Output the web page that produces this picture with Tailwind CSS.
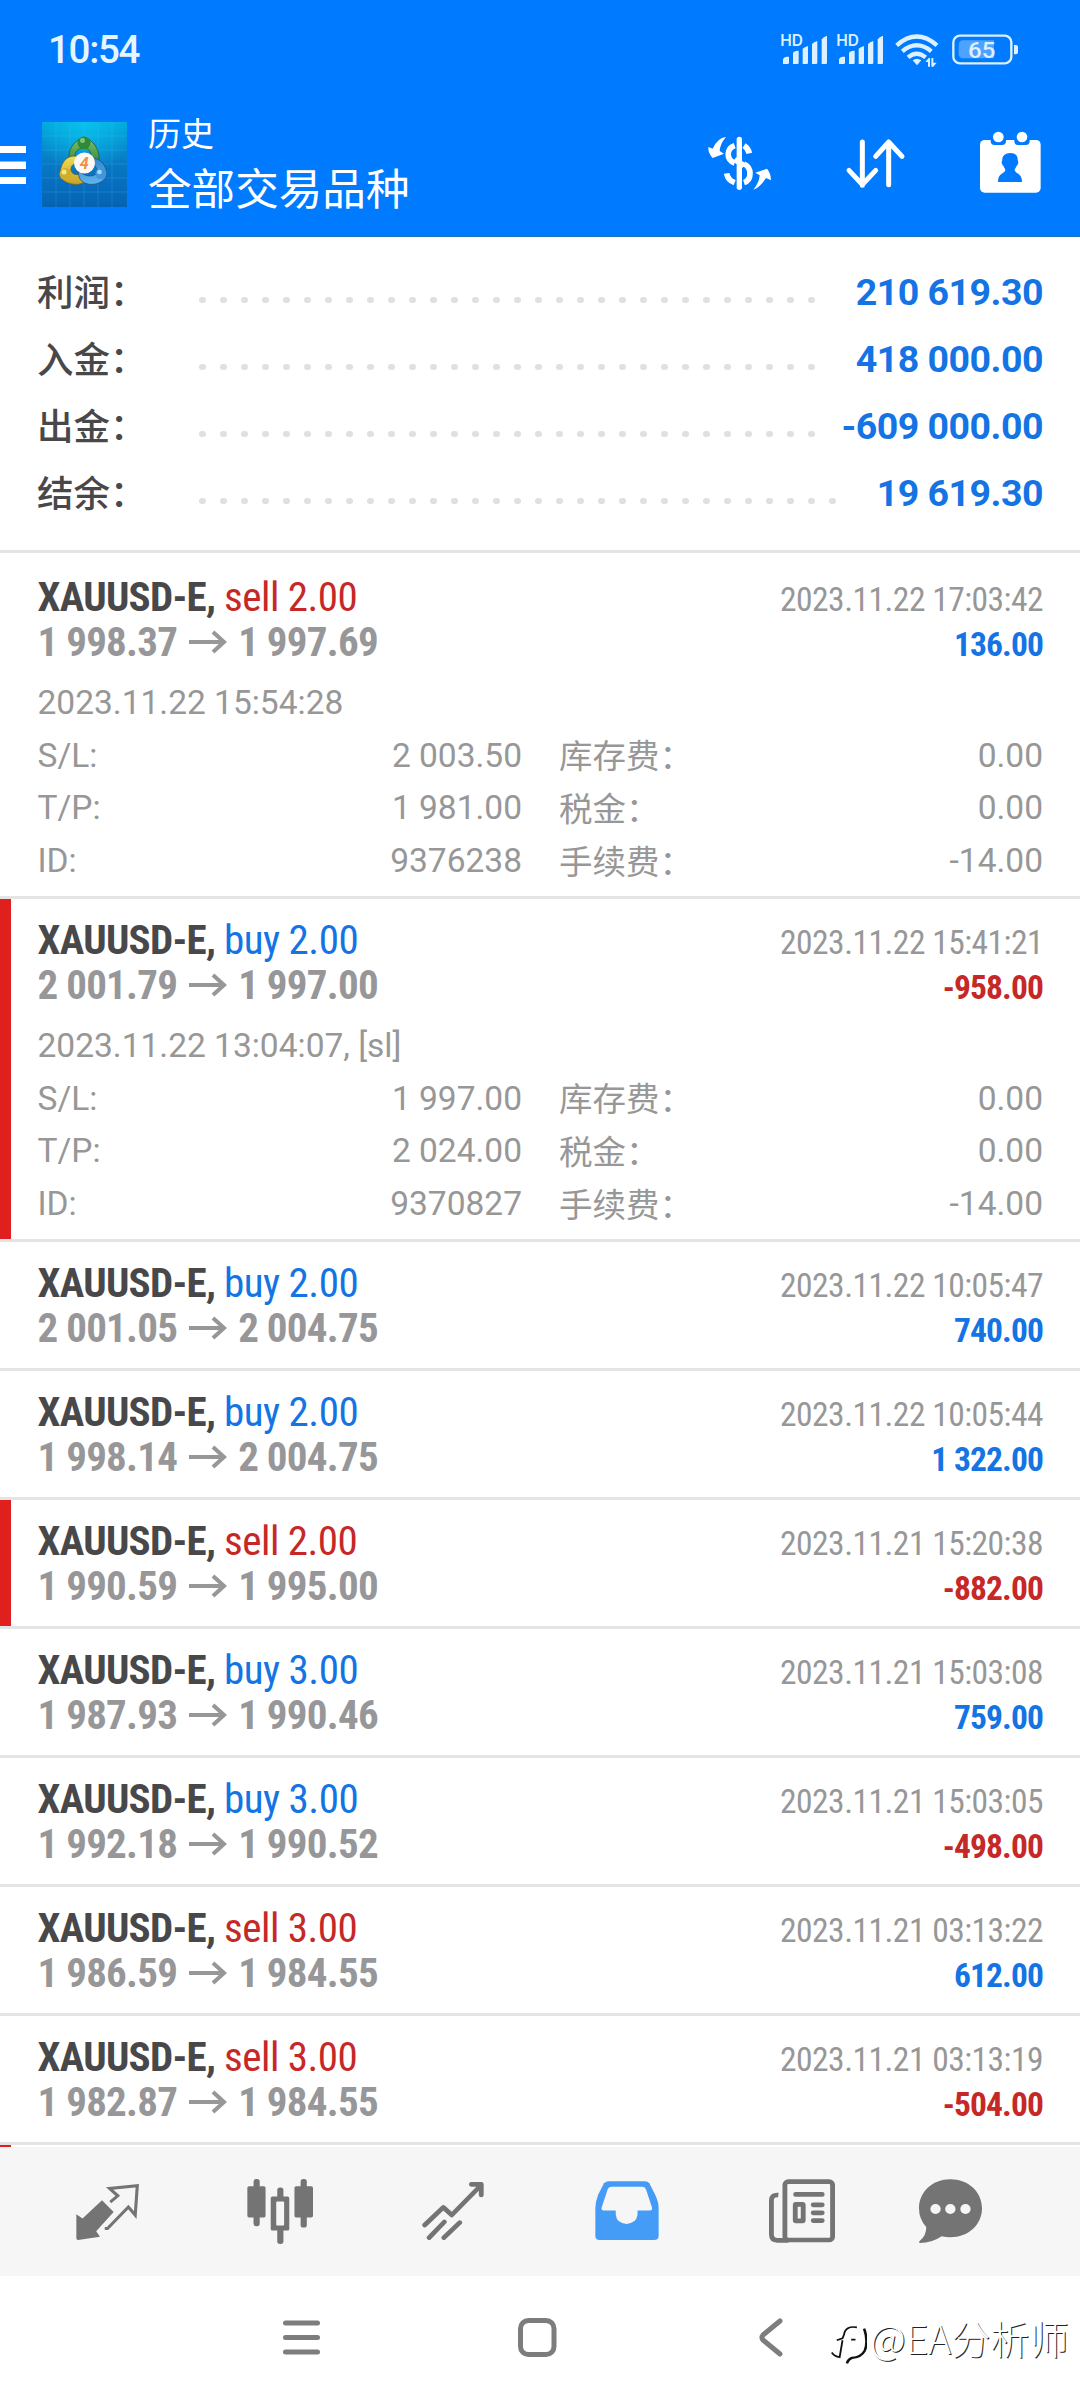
<!DOCTYPE html>
<html lang="zh-CN">
<head>
<meta charset="utf-8">
<title>历史</title>
<script src="https://cdn.jsdelivr.net/npm/@tailwindcss/browser@4"></script>
</head>
<body class="w-[1080px] h-[2400px] overflow-hidden bg-white font-['Roboto','Noto_Sans_CJK_SC',sans-serif] flex flex-col">

<header class="h-[237px] shrink-0 bg-[#007aff] text-white flex flex-col border-b-2 border-[#1f74c4]">
  <div class="h-[100px] shrink-0 flex items-center pl-[48px] pr-[60px]">
    <span class="text-[38.500px] font-medium tracking-[-1.3px] text-[#e6f6ff] flex-1">10:54</span>
    <svg class="w-[240px] h-[40px]" viewBox="300 90 720 120" fill="#dcf0ff">
      <g id="sig">
        <text x="301" y="137" font-size="47" font-weight="600" font-family="Inter" textLength="68" lengthAdjust="spacingAndGlyphs">HD</text>
        <path d="M309 192v-14q2-7 10-8h8v18q0 4-4 4zM339 192v-34q4-6 15-6h2v36q0 4-4 4zM368 192v-46q5-5 16-8v50q0 4-4 4zM396 192v-60q5-6 16-9v65q0 4-4 4zM425 192v-74q5-8 16-11v81q0 4-4 4z"/>
      </g>
      <use href="#sig" x="168"/>
      <g fill="none" stroke="#dcf0ff" stroke-width="13">
        <path d="M650 136Q710 83 771 136"/><path d="M667 154Q710 118 754 154"/><path d="M684 172Q710 150 737 172"/>
      </g>
      <path d="M698 181q13-9 26 0l-13 15zM736 186l10-12h4v26h-6v-14zM754 174h6v14h10l-10 12h-6z"/>
      <rect x="820" y="107" width="174" height="83" rx="20" fill="none" stroke="#dcf0ff" stroke-width="7"/>
      <path d="M836 135q0-14 14-14h92v54h-92q-14 0-14-14z" fill="#4da3ff"/>
      <path d="M1002 135h6q6 0 6 6v16q0 6-6 6h-6z"/>
      <text x="864" y="174" font-size="68" font-weight="500" font-family="Roboto" textLength="82" lengthAdjust="spacingAndGlyphs">65</text>
    </svg>
  </div>
  <div class="flex-1 flex items-start">
    <svg class="w-[26px] h-[39px] mt-[46px]" viewBox="0 0 26 39" fill="#fff"><path d="M0 0h26v7H0zM0 15.500h26v7.500H0zM0 31h26v7H0z"/></svg>
    <svg class="w-[85px] h-[85px] mt-[22px] ml-[16px]" viewBox="0 0 85 85">
      <defs>
        <linearGradient id="bg" x1="0" y1="0" x2="0" y2="1"><stop offset="0" stop-color="#02a6dc"/><stop offset=".5" stop-color="#0878c4"/><stop offset="1" stop-color="#0562b4"/></linearGradient>
        <radialGradient id="glow" cx=".5" cy="0" r=".6"><stop offset="0" stop-color="#0ac8f0" stop-opacity=".8"/><stop offset="1" stop-color="#0ac8f0" stop-opacity="0"/></radialGradient>
        <linearGradient id="gg" x1="0" y1="0" x2="0" y2="1"><stop offset="0" stop-color="#86c272"/><stop offset="1" stop-color="#2a8434"/></linearGradient>
        <linearGradient id="yy" x1="0" y1="0" x2="0" y2="1"><stop offset="0" stop-color="#eede58"/><stop offset="1" stop-color="#c8a424"/></linearGradient>
        <linearGradient id="bb" x1="0" y1="0" x2="0" y2="1"><stop offset="0" stop-color="#2f86cc"/><stop offset="1" stop-color="#62b4ea"/></linearGradient>
      </defs>
      <rect width="85" height="85" fill="url(#bg)"/><rect width="85" height="85" fill="url(#glow)"/>
      <path d="M14 0v85M28 0v85M42 0v85M56 0v85M70 0v85M0 14h85M0 28h85M0 42h85M0 56h85M0 70h85" stroke="#5cc4ee" stroke-opacity=".22" stroke-width="1"/>
      <path d="M42 15C50 18 58 26 57 38 56 44 52 44 48 42 52 32 47 26 42 26 36 26 32 30 33 37 31 42 27 38 27 34 27 25 34 18 42 15z" fill="url(#gg)" stroke="#1d5a3c" stroke-width=".8"/>
      <path d="M34 34C24 33 18 42 18 53 20 62 36 65 43 60 40 57 38 54 38 52 33 54 28 51 29 46 30 42 34 41 36 40z" fill="url(#yy)" stroke="#6d6420" stroke-width=".8"/>
      <path d="M53 36C62 39 66 48 64 55 58 65 42 64 38 57 36 52 36 50 37 48 42 55 50 55 54 52 56 48 54 44 51 42z" fill="url(#bb)" stroke="#1c4f86" stroke-width=".8"/>
      <circle cx="42" cy="21" r="6.500" fill="#2f8a38"/><circle cx="40.500" cy="18.500" r="2.500" fill="#7cc47a"/>
      <circle cx="23.500" cy="52" r="6" fill="#d0ae2c"/><circle cx="22" cy="50" r="2.500" fill="#f3e88a"/>
      <circle cx="59" cy="51.500" r="5.500" fill="#3f96de"/><circle cx="57.500" cy="50" r="2.300" fill="#a8dafa"/>
      <circle cx="42.500" cy="41" r="10.500" fill="#fdf8f4"/>
      <text x="42.300" y="47" text-anchor="middle" font-size="16" font-weight="700" font-style="italic" font-family="Roboto" fill="#ee8f48">4</text>
    </svg>
    <div class="flex-1 flex flex-col pl-[21px] pt-[9.500px] font-['Noto_Sans_CJK_SC',sans-serif] font-normal whitespace-nowrap">
      <span class="text-[33px] leading-[44px]">历史</span>
      <span class="text-[43.600px] leading-[64px]">全部交易品种</span>
    </div>
    <svg class="w-[400px] h-[110px]" viewBox="0 300 1200 330" fill="#fff" stroke-linecap="round" stroke-linejoin="round">
      <g fill="none" stroke="#fff">
        <path d="M178 418v144" stroke-width="16"/>
        <path d="M164 437C138 446 138 480 164 489M192 437Q205 445 208 460M192 492C216 502 216 540 192 548M164 548Q143 540 140 520" stroke-width="17" stroke-linecap="butt"/>
        <path d="M164 478L192 497" stroke-width="17" stroke-linecap="butt"/>
      </g>
      <path d="M138 411Q112 414 98 446L85 441Q84 460 98 474L132 461L119 453Q120 432 138 411zM220 569Q240 562 258 534L273 541Q273 520 261 506L226 518L239 526Q238 548 220 569z"/>
      <path d="M547 426v130M507 511l40 43 40-43M626 554V426M587 469l39-43 40 43" fill="none" stroke="#fff" stroke-width="15"/>
      <rect x="900" y="420" width="182" height="158" rx="14"/>
      <path d="M932 418v5q0 12 12 12h22q12 0 12-12v-5zM1003 418v5q0 12 12 12h22q12 0 12-12v-5z" fill="#007aff"/>
      <circle cx="955" cy="411" r="16"/><circle cx="1026" cy="411" r="16"/>
      <path d="M991 459c17 0 23 10 22 22 4 4 1 14-3 16-2 6-6 9-6 14 4 12 22 8 22 35h-72c0-27 18-23 22-35 0-5-4-8-6-14-4-2-7-12-3-16-1-12 7-22 24-22z" fill="#007aff"/>
    </svg>
  </div>
</header>

<section class="h-[313px] shrink-0 pt-[22px] px-[37px] flex flex-col" id="summary"></section>
<div class="h-[3px] shrink-0 bg-[#e4e4e4]"></div>

<main class="h-[1594px] shrink-0 overflow-hidden pt-[3px]" id="list"></main>

<nav class="h-[129px] shrink-0 bg-[#f6f6f6] flex items-start pl-[76px] pt-px text-[#747474]">
  <svg class="w-[63px] h-[56px] mt-[36px]" viewBox="220 191 184 166" preserveAspectRatio="none" fill="currentColor">
    <path d="M296 239L330 274 279 331 290 347 226 357Q221 357 221 351V281L239 293z"/>
    <path d="M320 245L342 226 318 204 399 196 393 283 373 259 312 323H304" fill="none" stroke="currentColor" stroke-width="9"/>
  </svg>
  <svg class="w-[66px] h-[65px] mt-[31px] ml-[108px]" viewBox="717 176 192 194" preserveAspectRatio="none" fill="currentColor">
    <rect x="736" y="176" width="18" height="141" rx="8"/><rect x="718" y="198" width="53" height="93" rx="5"/>
    <rect x="873" y="176" width="18" height="145" rx="8"/><rect x="855" y="198" width="54" height="93" rx="5"/>
    <rect x="805" y="201" width="18" height="169" rx="8"/><rect x="786" y="228" width="54" height="102" rx="5"/><rect x="802" y="243" width="23" height="72" rx="3" fill="#f6f6f6"/>
  </svg>
  <svg class="w-[62px] h-[58px] mt-[34px] ml-[109px]" viewBox="1225 183 181 174" preserveAspectRatio="none" fill="none" stroke="currentColor" stroke-width="14" stroke-linecap="round" stroke-linejoin="round">
    <path d="M1233 312L1287 259 1312 282 1398 192M1369 190H1398V222M1246 350L1290 303M1289 350L1335 305"/>
  </svg>
  <svg class="w-[64px] h-[59px] mt-[33px] ml-[111px]" viewBox="161 181 185 176" preserveAspectRatio="none">
    <path d="M202 182H305Q314 182 318 188L335 222Q345 244 345 262V345Q345 357 332 357H174Q162 357 162 345V262Q162 244 170 222L187 188Q192 182 202 182z" fill="#459cf7"/>
    <path d="M209 198H297Q305 198 308 205L326 261Q327 269 320 269H284V282Q280 308 252 309 224 308 221 282V269H186Q179 269 180 261L198 205Q201 198 209 198z" fill="#f6f6f6"/>
  </svg>
  <svg class="w-[66px] h-[64px] mt-[31px] ml-[110px]" viewBox="664 174 191 191" preserveAspectRatio="none" fill="none" stroke="currentColor" stroke-width="14">
    <rect x="710" y="182" width="138" height="174" rx="10"/>
    <path d="M691 222Q671 220 671 238V340Q671 357 688 357H720"/>
    <path d="M741 220H818M792 251H818M792 275H818M792 298H818" stroke-linecap="round"/>
    <rect x="740" y="250" width="23" height="49" rx="2"/>
  </svg>
  <svg class="w-[63px] h-[64px] mt-[31px] ml-[84px]" viewBox="1102 174 183 192" preserveAspectRatio="none" fill="currentColor">
    <path d="M1193 175C1245 175 1285 212 1285 262S1245 349 1193 349Q1180 349 1168 346 1140 366 1104 366 1100 364 1106 358 1124 342 1123 318 1102 295 1102 262C1102 212 1142 175 1193 175z"/>
    <g fill="#f6f6f6"><circle cx="1150" cy="264" r="15"/><circle cx="1193" cy="264" r="15"/><circle cx="1237" cy="264" r="15"/></g>
  </svg>
</nav>

<footer class="h-[124px] shrink-0 bg-white flex items-start pl-[283px]">
  <svg class="w-[37px] h-[36px] shrink-0 mt-[44px]" viewBox="0 0 37 36" stroke="#7d7d7d" stroke-width="5" stroke-linecap="round"><path d="M2.500 3h32M2.500 17.500h32M2.500 32h32"/></svg>
  <svg class="w-[39px] h-[39px] shrink-0 mt-[42px] ml-[198px]" viewBox="0 0 39 39" fill="none" stroke="#7d7d7d" stroke-width="5"><rect x="2.500" y="2.500" width="33.500" height="34" rx="8"/></svg>
  <svg class="w-[24px] h-[39px] shrink-0 mt-[42px] ml-[202px]" viewBox="0 0 24 39" fill="none" stroke="#7d7d7d" stroke-width="5" stroke-linecap="round" stroke-linejoin="round"><path d="M21 3L4 17Q2 19.500 4 22L21 36"/></svg>
  <svg class="w-[36px] h-[38px] shrink-0 mt-[50px] ml-[48px]" viewBox="846 620 100 112" preserveAspectRatio="none" fill="none" stroke="#111" stroke-width="5"><path d="M918 624Q886 618 882 646L878 656 862 662M878 662L870 712Q856 710 848 698M902 660H914"/><path d="M938 628Q950 664 940 692 930 712 904 714 894 718 890 730" stroke-width="7"/></svg>
  <span class="mt-[34px] ml-[3px] w-[204px] shrink-0 whitespace-nowrap text-[39.200px] leading-[54px] text-white font-['Noto_Sans_CJK_SC',sans-serif] font-light [text-shadow:1px_1px_0_#222]">@EA分析师</span>
</footer>

<script>
const summary = [['利润', '210 619.30', 30], ['入金', '418 000.00', 30], ['出金', '-609 000.00', 30], ['结余', '19 619.30', 31]];
document.getElementById('summary').innerHTML = summary.map(([k, v, n]) => `
  <div class="h-[67px] flex items-center">
    <span class="w-[162px] pb-[3px] text-[36.500px] font-medium text-[#48484a] font-['Noto_Sans_CJK_SC',sans-serif]">${k}：</span>
    <span class="flex gap-[14.500px] pt-[15px]">${'<i class="size-[6.500px] rounded-full bg-[#e0e0e0]"></i>'.repeat(n)}</span>
    <span class="flex-1 text-right text-[37.500px] font-bold tracking-[-0.5px] text-[#1474e4]">${v}</span>
  </div>`).join('');

const deals = [
  ['sell 2.00', '1 998.37', '1 997.69', '2023.11.22 17:03:42', '136.00', false, ['2023.11.22 15:54:28', '2 003.50', '1 981.00', '9376238']],
  ['buy 2.00', '2 001.79', '1 997.00', '2023.11.22 15:41:21', '-958.00', true, ['2023.11.22 13:04:07, [sl]', '1 997.00', '2 024.00', '9370827']],
  ['buy 2.00', '2 001.05', '2 004.75', '2023.11.22 10:05:47', '740.00', false],
  ['buy 2.00', '1 998.14', '2 004.75', '2023.11.22 10:05:44', '1 322.00', false],
  ['sell 2.00', '1 990.59', '1 995.00', '2023.11.21 15:20:38', '-882.00', true],
  ['buy 3.00', '1 987.93', '1 990.46', '2023.11.21 15:03:08', '759.00', false],
  ['buy 3.00', '1 992.18', '1 990.52', '2023.11.21 15:03:05', '-498.00', false],
  ['sell 3.00', '1 986.59', '1 984.55', '2023.11.21 03:13:22', '612.00', false],
  ['sell 3.00', '1 982.87', '1 984.55', '2023.11.21 03:13:19', '-504.00', false],
];
const line = (a, b, c, d) => `
  <div class="h-[52.800px] flex items-center">
    <span class="flex-1">${a}</span><span>${b}</span>
    <span class="w-[216px] pl-[37px] pb-[3px] text-[33.500px] font-['Noto_Sans_CJK_SC',sans-serif]">${c}：</span>
    <span class="w-[305px] text-right">${d}</span>
  </div>`;
document.getElementById('list').innerHTML = deals.map(([op, p1, p2, t, pr, bar, det]) => `
  <div class="flex border-b-[3px] border-[#e4e4e4]">
    <div class="w-[10.500px] shrink-0 ${bar ? 'bg-[#e01f1f]' : 'bg-white'}"></div>
    <div class="flex-1 pl-[27px] pr-[37px] pt-[18.500px] ${det ? 'h-[340px]' : 'h-[126px]'}">
      <div class="h-[45px] flex justify-between items-baseline whitespace-nowrap font-stretch-75%">
        <span class="text-[41px] leading-[45px] font-bold tracking-[-0.7px] text-[#48484a]">XAUUSD-E, <span class="font-normal tracking-[-0.5px] ${op[0] === 's' ? 'text-[#c62828]' : 'text-[#1474e4]'}">${op}</span></span>
        <span class="text-[33.500px] leading-[45px] tracking-[-0.5px] text-[#979797]">${t}</span>
      </div>
      <div class="h-[45px] flex items-baseline whitespace-nowrap font-stretch-75%">
        <span class="text-[41px] leading-[45px] font-bold tracking-[-0.75px] text-[#979799]">${p1}</span>
        <svg class="w-[38px] h-[24px] ml-[12px] mr-[11px] -translate-y-[2px]" viewBox="0 0 38 24" fill="none" stroke="#979799" stroke-width="4"><path d="M0 12h36M24 2l11 10-11 10"/></svg>
        <span class="text-[41px] leading-[45px] font-bold tracking-[-0.75px] text-[#979799]">${p2}</span>
        <span class="flex-1 text-right text-[33.500px] leading-[45px] font-bold tracking-[-0.9px] ${pr[0] === '-' ? 'text-[#c62828]' : 'text-[#1474e4]'}">${pr}</span>
      </div>
      ${det ? `<div class="pt-[12px] text-[33.500px] font-normal text-[#979797]">
        <div class="h-[52.800px] flex items-center">${det[0]}</div>
        ${line('S/L:', det[1], '库存费', '0.00')}${line('T/P:', det[2], '税金', '0.00')}${line('ID:', det[3], '手续费', '-14.00')}
      </div>` : ''}
    </div>
  </div>`).join('') + '<div class="w-[10.500px] h-[126px] bg-[#e01f1f]"></div>';
</script>
</body>
</html>
